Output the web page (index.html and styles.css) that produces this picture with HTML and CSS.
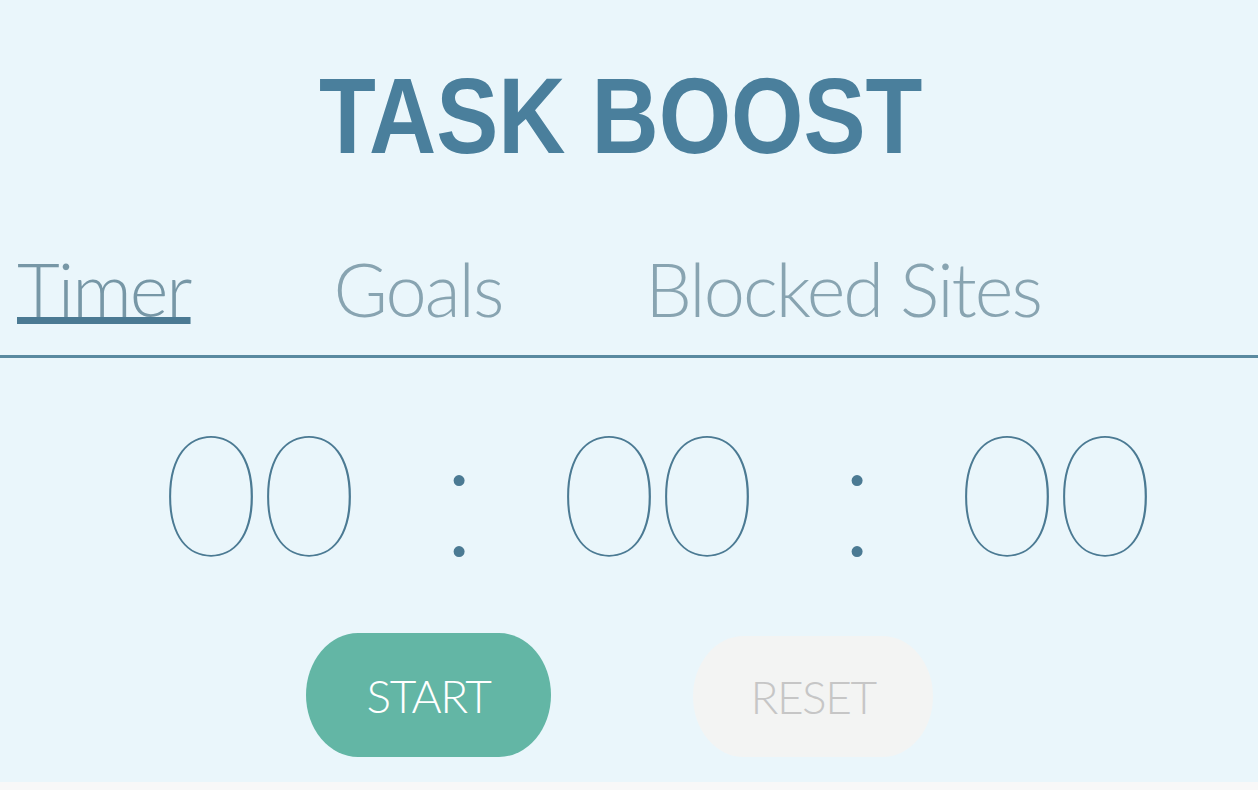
FILE: index.html
```html
<!DOCTYPE html>
<html lang="en">
<head>
<meta charset="utf-8">
<title>Task Boost</title>
<link rel="stylesheet" href="styles.css">
</head>
<body>
<main class="app">
  <h1 class="title">TASK BOOST</h1>
  <nav class="tabs">
    <a class="tab active">Timer</a>
    <a class="tab">Goals</a>
    <a class="tab">Blocked Sites</a>
  </nav>
  <section class="clock">
    <span class="unit">00</span>
    <span class="sep">:</span>
    <span class="unit">00</span>
    <span class="sep">:</span>
    <span class="unit">00</span>
  </section>
  <div class="actions">
    <button class="btn btn-start">START</button>
    <button class="btn btn-reset">RESET</button>
  </div>
</main>
</body>
</html>
```

FILE: styles.css
```css
html, body {
  margin: 0;
  padding: 0;
}
body {
  background: #f8f8f8;
  width: 1258px;
  height: 790px;
  overflow: hidden;
  font-family: "Lato", "Inter", sans-serif;
}
.app {
  height: 782px;
  background: #eaf6fb;
  display: flex;
  flex-direction: column;
}
.title {
  margin: 63px 0 0;
  font-family: "Liberation Sans", Arial, sans-serif;
  font-weight: 700;
  font-size: 107px;
  line-height: 107px;
  color: #4a7f9c;
  text-align: center;
  padding-right: 19px;
  height: 107px;
  transform: scaleX(0.87);
}
.tabs {
  margin-top: 80px;
  display: flex;
  gap: 143px;
  padding: 0 0 28px 17px;
  border-bottom: 3px solid #5a8aa0;
}
.tab {
  font-family: "Lato", sans-serif;
  font-weight: 300;
  font-size: 74px;
  line-height: 77px;
  color: #88a4b1;
  letter-spacing: -2px;
  text-decoration: none;
}
.tab.active {
  color: #7797a6;
  text-decoration: underline;
  text-decoration-color: #4b7a93;
  text-decoration-thickness: 7px;
  text-underline-offset: 0px;
}
.clock {
  margin-top: 48px;
  display: grid;
  grid-template-columns: 186px 20px 186px 20px 186px;
  column-gap: 96px;
  padding-left: 167px;
  font-family: "Lato", sans-serif;
  font-weight: 200;
  font-size: 169px;
  line-height: 169px;
  color: #4b7a93;
}
.unit, .sep {
  text-align: center;
  white-space: nowrap;
  display: flex;
  justify-content: center;
}
.actions {
  margin-top: 58px;
  display: flex;
  align-items: flex-end;
  gap: 142px;
  padding-left: 306px;
}
.btn {
  border: none;
  font-family: "Lato", sans-serif;
  font-weight: 300;
  font-size: 46px;
  letter-spacing: -1.5px;
  padding: 0;
  border-radius: 52px / 62px;
}
.btn-start {
  width: 245px;
  height: 124px;
  background: #63b6a5;
  color: #ffffff;
}
.btn-reset {
  width: 240px;
  height: 121px;
  background: #f3f4f3;
  color: #c6c6c6;
}
```
